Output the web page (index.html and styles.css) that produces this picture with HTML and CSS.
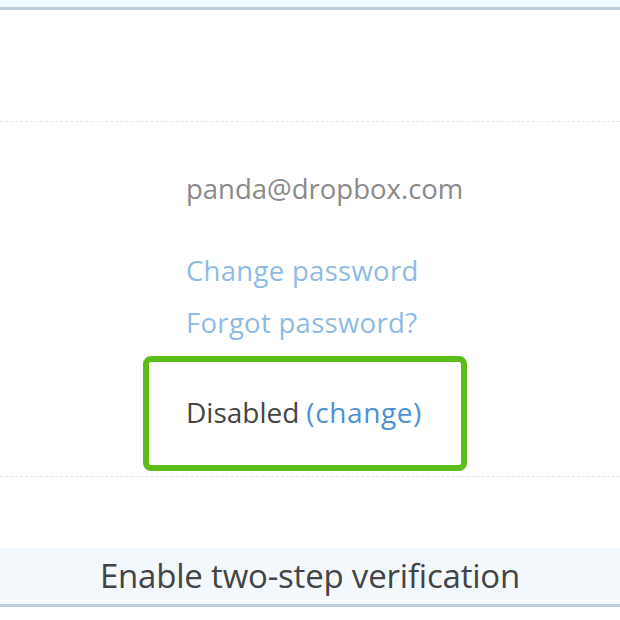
FILE: index.html
```html
<!DOCTYPE html>
<html lang="en">
<head>
  <meta charset="UTF-8" />
  <title>Account settings</title>
  <link rel="stylesheet" href="styles.css">
</head>
<body>

  <!-- Top edge of the panel -->
  <div class="top-bar"></div>

  <!-- Settings rows -->
  <section class="settings">
    <div class="row">
      <span class="email">panda@dropbox.com</span>
    </div>

    <div class="row links">
      <a href="#" class="link">Change password</a>
      <a href="#" class="link">Forgot password?</a>
    </div>

    <div class="row">
      <div class="highlight-box">
        <span class="status">Disabled</span> <a href="#" class="change-link">(change)</a>
      </div>
    </div>
  </section>

  <!-- Dialog title bar -->
  <div class="dialog-title">Enable two-step verification</div>

</body>
</html>
```

FILE: styles.css
```css
body {
  margin: 0;
  font-family: "Open Sans", Arial, sans-serif;
  background: #fff;
}

.top-bar {
  height: 7px;
  background: #f2fbff;
  border-bottom: 3px solid #bccddc;
}

.settings {
  margin-top: 111px;
  border-top: 1px dashed #e6e6e6;
  border-bottom: 1px dashed #e6e6e6;
  padding: 0 0 5px 143px;
}

.row {
  display: flex;
  flex-direction: column;
}

.email {
  margin: 48px 0 0 43px;
  font-size: 27.5px;
  color: #8a8a8a;
}

.links {
  margin: 42px 0 0 43px;
  gap: 9px;
}

.link {
  font-size: 27.5px;
  color: #8fbbe3;
  text-decoration: none;
  letter-spacing: 0.3px;
  line-height: 43px;
}

.highlight-box {
  box-sizing: border-box;
  width: 324px;
  height: 115px;
  margin-top: 12px;
  border: 6px solid #5cbd18;
  border-radius: 8px;
  display: flex;
  align-items: center;
  padding: 0 0 4px 37px;
  font-size: 28px;
}

.status {
  color: #444;
}

.change-link {
  margin-left: 7px;
  color: #4c92d2;
  text-decoration: none;
  letter-spacing: 0.6px;
}

.dialog-title {
  margin-top: 71px;
  height: 56px;
  background: #f3f8fd;
  border-bottom: 3px solid #bccddc;
  text-align: center;
  font-size: 33px;
  line-height: 56px;
  color: #444;
  letter-spacing: -0.2px;
}
```
